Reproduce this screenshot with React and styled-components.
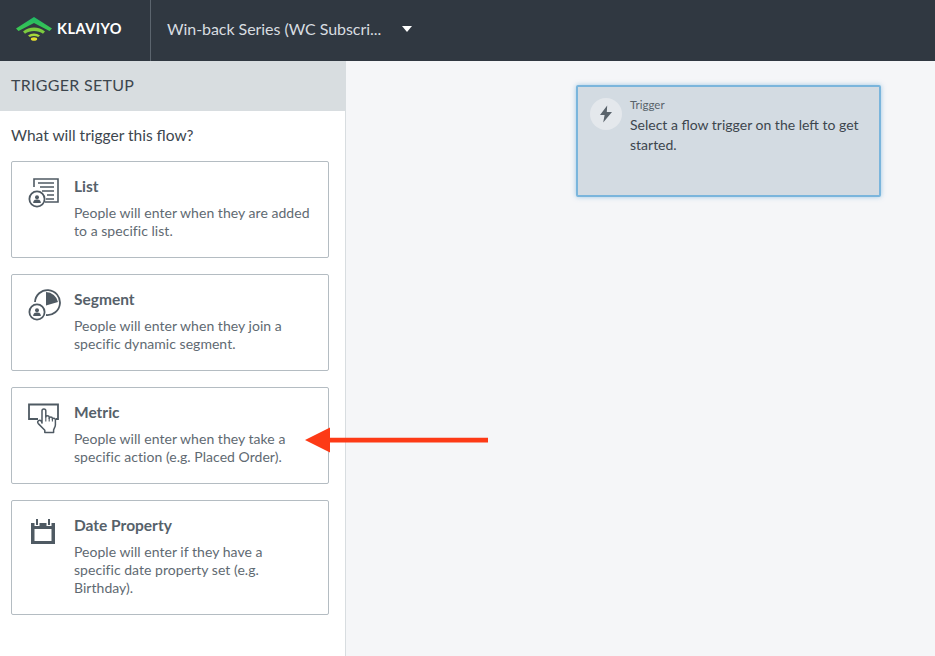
import React from "react";
import styled, { createGlobalStyle } from "styled-components";

const GlobalStyle = createGlobalStyle`
  html, body {
    margin: 0;
    padding: 0;
    height: 100%;
    overflow: hidden;
    background: #fff;
    font-family: "Lato", "Liberation Sans", sans-serif;
  }
  * {
    box-sizing: border-box;
  }
`;

const ListIcon = () => (
  <svg width="34" height="34" viewBox="0 0 34 34" fill="none" stroke="#4f5a63">
    <path d="M7 11V3h24v23H18" strokeWidth="1.6" />
    <path d="M11 7h16M13 11h14M15 15h12M20 19h7M19 23h8" strokeWidth="1.4" />
    <circle cx="10" cy="23" r="7.6" fill="#fff" strokeWidth="1.8" />
    <circle cx="10" cy="21.2" r="2" fill="#4f5a63" stroke="none" />
    <path d="M6.2 27c0-3 1.6-3.6 3.8-3.6s3.8.6 3.8 3.6z" fill="#4f5a63" stroke="none" />
  </svg>
);

const SegmentIcon = () => (
  <svg width="34" height="34" viewBox="0 0 34 34" fill="none" stroke="#4f5a63">
    <path d="M8 13A12.500 12.500 0 1 1 19 26" strokeWidth="1.8" />
    <path d="M19 3A12.500 12.500 0 0 1 31 13L19 16.500z" fill="#4f5a63" stroke="none" />
    <circle cx="10" cy="23" r="7.6" fill="#fff" strokeWidth="1.8" />
    <circle cx="10" cy="21.2" r="2" fill="#4f5a63" stroke="none" />
    <path d="M6.2 27c0-3 1.6-3.6 3.8-3.6s3.8.6 3.8 3.6z" fill="#4f5a63" stroke="none" />
  </svg>
);

const MetricIcon = () => (
  <svg width="34" height="34" viewBox="0 0 34 34" fill="none" stroke="#4f5a63">
    <path d="M11 17H2V2.500h29V17h-2" strokeWidth="1.8" />
    <path
      d="M15 21V8.800c0-2.400 3.800-2.400 3.800 0V15c.2-1.800 3.200-1.800 3.400 0v1.200c.2-1.600 3-1.600 3.200 0v1c.3-1.400 3-1.300 3 .5v5.300c0 1.800-1.400 3.500-1.800 5v2.500H17.800v-2.300l-6.500-6.600c-1.900-2.200 1-4.400 3-2.500z"
      fill="#fff"
      strokeWidth="1.5"
      strokeLinejoin="round"
    />
    <path d="M18.800 15v4.500M22.200 16v3.500M25.400 17v2.500" strokeWidth="1.1" />
  </svg>
);

const DateIcon = () => (
  <svg width="34" height="34" viewBox="0 0 34 34" fill="#4f5a63">
    <path
      fillRule="evenodd"
      d="M4 8h3.500v3h5V8h7v3h5V8H28v21H4zM7.500 14v12h17V14z"
    />
    <rect x="9" y="4" width="2" height="6" />
    <rect x="21" y="4" width="2" height="6" />
  </svg>
);

const BoltIcon = () => (
  <svg width="14" height="18" viewBox="0 0 14 18" fill="#59636b">
    <path d="M8.200 0.500 1 10h4.600L4.200 17.500 13 7H7.800z" />
  </svg>
);

const Logo = () => (
  <svg width="36" height="24" viewBox="0 0 36 24" fill="none">
    <defs>
      <linearGradient id="logoRoof" x1="0" y1="0" x2="0" y2="1">
        <stop offset="0" stopColor="#1fb866" />
        <stop offset="1" stopColor="#3fc94f" />
      </linearGradient>
    </defs>
    <path d="M0 11.500 18 0l18 11.500-2.500 2.500L18 6 2.500 14z" fill="url(#logoRoof)" />
    <path d="M7 14.500c6-5.500 16-5.500 22 0l-2 2.300c-5-3.800-13-3.800-18 0z" fill="#7ccb3f" />
    <path d="M12 18.500c3.500-2.800 8.500-2.800 12 0l-1.800 1.500c-2.500-1.400-5.900-1.400-8.400 0z" fill="#a5d63a" />
    <ellipse cx="18" cy="22" rx="3.200" ry="1.800" fill="#e4dc2f" />
  </svg>
);

const triggers = [
  {
    title: "List",
    text: "People will enter when they are added to a specific list.",
    icon: <ListIcon />,
  },
  {
    title: "Segment",
    text: "People will enter when they join a specific dynamic segment.",
    icon: <SegmentIcon />,
  },
  {
    title: "Metric",
    text: "People will enter when they take a specific action (e.g. Placed Order).",
    icon: <MetricIcon />,
  },
  {
    title: "Date Property",
    text: "People will enter if they have a specific date property set (e.g. Birthday).",
    icon: <DateIcon />,
    tall: true,
  },
];

const App = () => {
  return (
    <Page>
      <GlobalStyle />
      <Header>
        <LogoArea>
          <Logo />
          <LogoText>KLAVIYO</LogoText>
        </LogoArea>
        <FlowName>
          <FlowTitle>Win-back Series (WC Subscri...</FlowTitle>
          <Caret />
        </FlowName>
      </Header>
      <Body>
        <Sidebar>
          <SidebarHeader>TRIGGER SETUP</SidebarHeader>
          <SidebarContent>
            <Question>What will trigger this flow?</Question>
            <CardList>
              {triggers.map(item => (
                <Card key={item.title} $tall={item.tall}>
                  <CardIcon>{item.icon}</CardIcon>
                  <div>
                    <CardTitle>{item.title}</CardTitle>
                    <CardText>{item.text}</CardText>
                  </div>
                </Card>
              ))}
            </CardList>
          </SidebarContent>
        </Sidebar>
        <Canvas>
          <TriggerNode>
            <BoltCircle>
              <BoltIcon />
            </BoltCircle>
            <div>
              <NodeLabel>Trigger</NodeLabel>
              <NodeText>Select a flow trigger on the left to get started.</NodeText>
            </div>
          </TriggerNode>
        </Canvas>
        <Arrow>
          <svg width="184" height="26" viewBox="0 0 184 26">
            <path d="M0 13 25 0.500V10.800H183V15.500H25V25.500z" fill="#fd3a16" />
          </svg>
        </Arrow>
      </Body>
    </Page>
  );
};

export default App;

const Page = styled.div`
  width: 935px;
  height: 656px;
  display: flex;
  flex-direction: column;
  overflow: hidden;
`;

const Header = styled.header`
  height: 61px;
  flex: none;
  display: flex;
  background: #303841;
`;

const LogoArea = styled.div`
  width: 151px;
  padding: 17px 0 0 16px;
  display: flex;
  align-items: flex-start;
  gap: 5px;
  border-right: 1px solid #5c656e;
`;

const LogoText = styled.span`
  margin-top: 3px;
  color: #fff;
  font-size: 14.5px;
  font-weight: 700;
  letter-spacing: 0.5px;
`;

const FlowName = styled.div`
  display: flex;
  align-items: center;
  padding: 0 0 4px 16px;
`;

const FlowTitle = styled.span`
  width: 235px;
  color: #d8dde0;
  font-size: 16px;
  letter-spacing: -0.05px;
`;

const Caret = styled.span`
  width: 0;
  height: 0;
  border-left: 5.5px solid transparent;
  border-right: 5.5px solid transparent;
  border-top: 6px solid #fff;
`;

const Body = styled.main`
  position: relative;
  flex: 1;
  display: flex;
`;

const Sidebar = styled.aside`
  width: 346px;
  flex: none;
  border-right: 1px solid #d8dde0;
  background: #fff;
`;

const SidebarHeader = styled.div`
  height: 50px;
  padding: 0 0 4px 11px;
  display: flex;
  align-items: center;
  background: #d8dde0;
  color: #3d464e;
  font-size: 16px;
  letter-spacing: 0.28px;
`;

const SidebarContent = styled.div`
  padding: 14px 16px 0 11px;
`;

const Question = styled.div`
  height: 36px;
  color: #3d464e;
  font-size: 15.5px;
  line-height: 20px;
`;

const CardList = styled.div`
  display: flex;
  flex-direction: column;
  gap: 16px;
`;

const Card = styled.div`
  height: ${({ $tall }) => ($tall ? "115px" : "97px")};
  padding: 14px 14px 0 15px;
  display: flex;
  gap: 13px;
  border: 1px solid #b4bcc2;
  border-radius: 2px;
  background: #fff;
`;

const CardIcon = styled.div`
  width: 34px;
  flex: none;
`;

const CardTitle = styled.div`
  height: 20px;
  margin-bottom: 8px;
  color: #56616a;
  font-size: 15.5px;
  font-weight: 700;
  line-height: 20px;
`;

const CardText = styled.div`
  width: 237.5px;
  color: #5f6a72;
  font-size: 14px;
  line-height: 18px;
  letter-spacing: 0.04px;
`;

const Canvas = styled.section`
  flex: 1;
  padding: 24px 0 0 230px;
  background: #f5f6f8;
`;

const TriggerNode = styled.div`
  width: 305px;
  height: 112px;
  padding: 11px 12px 0 12px;
  display: flex;
  gap: 8px;
  border: 2px solid #7ab5dc;
  border-radius: 2px;
  background: #d3dbe2;
  box-shadow: 0 0 5px rgba(122, 181, 220, 0.7);
`;

const BoltCircle = styled.div`
  width: 32px;
  height: 32px;
  flex: none;
  display: flex;
  align-items: center;
  justify-content: center;
  border-radius: 50%;
  background: #e4e8ec;
`;

const NodeLabel = styled.div`
  color: #59636b;
  font-size: 11.5px;
  line-height: 14px;
`;

const NodeText = styled.div`
  margin-top: 3px;
  color: #3d464e;
  font-size: 14px;
  line-height: 20px;
`;

const Arrow = styled.div`
  position: absolute;
  left: 305px;
  top: 366px;
  line-height: 0;
`;
